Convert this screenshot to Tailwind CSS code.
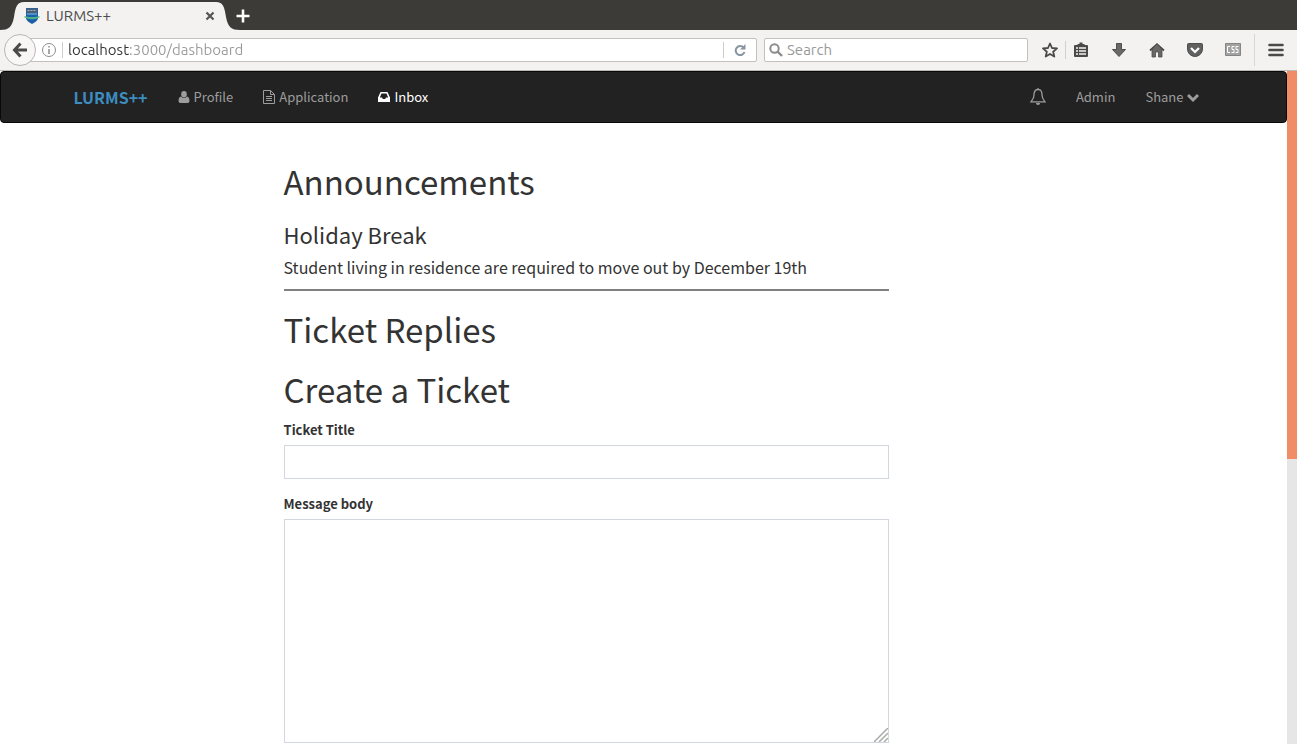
<!DOCTYPE html>
<html lang="en">
<head>
<meta charset="utf-8">
<meta name="viewport" content="width=device-width, initial-scale=1">
<title>LURMS++</title>
<script src="https://cdn.jsdelivr.net/npm/@tailwindcss/browser@4"></script>
</head>
<body class="flex min-h-screen flex-col bg-white font-['Noto_Sans_CJK_SC','Noto_Sans',sans-serif] text-[#333333]">

<!-- Browser window -->
<header class="font-[Ubuntu,'Noto_Sans',sans-serif] text-[15px] leading-[22px] text-[#4c4c4c]">
  <div class="flex h-[30px] items-end bg-[#3c3b37]">
    <svg class="h-7 w-6 shrink-0" viewBox="0 0 24 28" fill="#f3f2f0"><path d="M0 28C9 28 12 25 14 15C15.500 5 17 0 24 0V28Z"/></svg>
    <div class="flex h-7 w-[192px] items-center bg-[#f3f2f0]">
      <svg class="h-4 w-4 shrink-0" viewBox="0 0 16 16"><path d="M2 0H14V10Q14 13 8 16Q2 13 2 10Z" fill="#1c61a8"/><path d="M2.500 .5H13.500V5H2.500Z" fill="#4a6078"/><path d="M3.500 2.500H12.500" stroke="#9eb0bd" stroke-dasharray="2 1"/><path d="M3 6H13" stroke="#86bfe1"/><path d="M.5 8Q8 10.500 15.500 8V9.500Q8 13 .5 9.500Z" fill="#50b887"/></svg>
      <span class="ml-1.5">LURMS++</span>
      <button aria-label="Close tab" class="ml-auto"><svg class="h-3 w-3" viewBox="0 0 12 12" fill="none" stroke="#555" stroke-width="2.200"><path d="M2.500 2.500L9.500 9.500M9.500 2.500L2.500 9.500"/></svg></button>
    </div>
    <svg class="h-7 w-6 shrink-0" viewBox="0 0 24 28" fill="#f3f2f0"><path d="M0 0C7 0 8.500 5 10 15C12 25 15 28 24 28H0Z"/></svg>
    <button aria-label="New tab" class="-ml-1 flex h-7 items-center"><svg class="h-3.5 w-3.5" viewBox="0 0 14 14" fill="none" stroke="#fff" stroke-width="2.600"><path d="M7 0.500V13.500M.5 7H13.500"/></svg></button>
  </div>
  <div class="flex h-[41px] items-center border-b border-[#bdbbb7] bg-[#f3f2f0] pr-[13px] pl-1">
    <button aria-label="Back" class="z-10 flex h-8 w-8 shrink-0 items-center justify-center rounded-full border border-[#b9b6b2] bg-[#f8f7f6]"><svg class="h-4 w-4" viewBox="0 0 16 16" fill="none" stroke="#4a4a4a" stroke-width="3"><path d="M8.500 1.500L2.500 8L8.500 14.500M3 8H15"/></svg></button>
    <div class="-ml-2 flex h-6 min-w-0 flex-1 items-center rounded-r-xs border border-[#c4c0bb] bg-white pl-3">
      <svg class="h-4 w-4 shrink-0" viewBox="0 0 16 16" fill="none" stroke="#8c8c8c"><circle cx="8" cy="8" r="6.500"/><path d="M8 7V12M8 4V5.500" stroke-width="1.500"/></svg>
      <span class="ml-[5px] h-4 w-px bg-[#cccccc]"></span>
      <label for="url" class="sr-only">Address</label>
      <input id="url" value="localhost:3000/dashboard" class="ml-[5px] h-[22px] min-w-0 flex-1 bg-[linear-gradient(to_right,#333333_62px,#999999_62px)] bg-clip-text text-transparent outline-none">
      <span class="h-4 w-px bg-[#cccccc]"></span>
      <button aria-label="Reload" class="mx-2.5"><svg class="h-3 w-3" viewBox="0 0 12 12"><path d="M9.500 3.500A4.500 4.500 0 1 0 10.500 8" fill="none" stroke="#8794a1" stroke-width="2"/><path d="M11.500 0V5.500H6Z" fill="#8794a1"/></svg></button>
    </div>
    <div class="ml-[7px] flex h-6 w-[264px] items-center rounded-xs border border-[#c4c0bb] bg-white pl-1">
      <svg class="h-3.5 w-3.5 shrink-0" viewBox="0 0 14 14" fill="none" stroke="#8c8c8c"><circle cx="5.500" cy="5.500" r="4.200" stroke-width="2"/><path d="M8.500 8.500L13 13" stroke-width="2.400"/></svg>
      <label for="search" class="sr-only">Find</label>
      <input id="search" placeholder="Search" class="ml-1 h-[22px] w-full bg-transparent outline-none placeholder:text-[#999999]">
    </div>
    <button aria-label="Bookmark" class="ml-3.5"><svg class="h-4 w-4" viewBox="0 0 16 16" fill="none" stroke="#4a4a4a" stroke-width="1.800" stroke-linejoin="round"><path d="M8 1.500L10 6L15 6.400L11.200 9.700L12.300 14.600L8 12L3.700 14.600L4.800 9.700L1 6.400L6 6Z"/></svg></button>
    <span class="ml-[7px] h-[18px] w-px bg-[#d2d0cd]"></span>
    <button aria-label="Bookmarks list" class="ml-[7px]"><svg class="h-4 w-4" viewBox="0 0 16 16"><path d="M2 3H4.500V2H6.500V.5H9.500V2H11.500V3H14Q15 3 15 4V14Q15 15 14 15H2Q1 15 1 14V4Q1 3 2 3Z" fill="#4a4a4a"/><path d="M3 6H5M3 9H5M3 12H5M6 6H13M6 9H13M6 12H13" stroke="#f3f2f0" stroke-width="1.700"/></svg></button>
    <button aria-label="Downloads" class="ml-[22px]"><svg class="h-4 w-4" viewBox="0 0 16 16" fill="#686868" stroke="#4d4d4d"><path d="M5.500 1.500H10.500V7.500H14.500L8 14.500L1.500 7.500H5.500Z"/></svg></button>
    <button aria-label="Home" class="ml-[22px]"><svg class="h-4 w-4" viewBox="0 0 16 16"><path d="M3 8L8 4L13 8V15H9.500V10H6.500V15H3Z" fill="#686868" stroke="#4d4d4d" stroke-width=".8"/><path d="M1 8.500L8 2.200L15 8.500" fill="none" stroke="#4a4a4a" stroke-width="1.800"/></svg></button>
    <button aria-label="Pocket" class="ml-[22px]"><svg class="h-4 w-4" viewBox="0 0 16 16"><path d="M.5 2.500Q.5 1.500 1.500 1.500H14.500Q15.500 1.500 15.500 2.500V7A7.500 7.500 0 0 1 .5 7Z" fill="#606060" stroke="#4d4d4d"/><path d="M4 6L8 10L12 6" fill="none" stroke="#fff" stroke-width="2.200"/></svg></button>
    <button aria-label="CSS tool" class="mb-0.5 ml-[22px]"><svg class="h-[13px] w-4" viewBox="0 0 16 13"><path d="M.5 .5H15.500V12.500H.5Z" fill="#a2a2a2" stroke="#858585"/><path d="M5 3.500H2.500V9.500H5M9.500 3.500H7V6.500H9V9.500H6.500M13.500 3.500H11V6.500H13V9.500H10.500" fill="none" stroke="#fff"/></svg></button>
    <span class="ml-[13px] h-8 w-px bg-[#d9d7d5]"></span>
    <button aria-label="Menu" class="ml-[13px]"><svg class="h-4 w-4" viewBox="0 0 16 16" stroke="#4a4a4a" stroke-width="2.600" stroke-linecap="round"><path d="M1.500 3H14.500M1.500 8H14.500M1.500 13H14.500"/></svg></button>
  </div>
</header>

<!-- Page viewport and scroll track -->
<div class="flex flex-1">
  <div class="min-w-0 flex-1">
    <nav class="rounded-[4px] border border-[#080808] bg-[#222222] text-[13px] leading-5 text-[#9d9d9d]">
      <div class="mx-auto flex h-[50px] max-w-[1170px] items-center px-[15px]">
        <a href="#" class="text-[16px] font-bold text-[#3c8dc1]">LURMS++</a>
        <a href="#" class="ml-[30px] flex items-center gap-1"><svg class="h-3 w-3" viewBox="0 0 12 12" fill="#9d9d9d"><ellipse cx="6" cy="3.200" rx="2.800" ry="3.200"/><path d="M3 5.500Q6 8.500 9 5.500Q11.500 6 11.500 10Q11.500 12 9.500 12H2.500Q.5 12 .5 10Q.5 6 3 5.500Z"/></svg>Profile</a>
        <a href="#" class="ml-[30px] flex items-center gap-1"><svg class="h-3.5 w-3" viewBox="0 0 12 14" fill="none" stroke="#9d9d9d"><path d="M.5 .5H7.500L11.500 4.500V13.500H.5ZM7.500 .5V4.500H11.500M3 6.500H9M3 8.500H9M3 10.500H9"/></svg>Application</a>
        <a href="#" class="ml-[30px] flex items-center gap-1 text-white"><svg class="h-3 w-3" viewBox="0 0 12 12"><path fill="#fff" fill-rule="evenodd" d="M2.500 1H9.500L12 6.500V10.500Q12 11 11.500 11H.5Q0 11 0 10.500V6.500ZM3.500 2.500L1.800 6.500H4L4.800 8H7.200L8 6.500H10.200L8.500 2.500Z"/></svg>Inbox</a>
        <button aria-label="Notifications" class="ml-auto"><svg class="h-[18px] w-4" viewBox="0 0 16 18" fill="none" stroke="#9d9d9d" stroke-width="1.300"><path d="M8 1.500C4.500 1.500 4 4.500 4 7C4 10.500 2.500 12 1 13.800H15C13.500 12 12 10.500 12 7C12 4.500 11.500 1.500 8 1.500ZM8 0V2"/><path d="M6 15H10Q10 17 8 17Q6 17 6 15Z" fill="#9d9d9d" stroke="none"/></svg></button>
        <a href="#" class="ml-[30px]">Admin</a>
        <button class="mr-[15px] ml-[30px] flex items-center gap-[3px]">Shane<svg class="h-3 w-3" viewBox="0 0 12 12" fill="none" stroke="#9d9d9d" stroke-width="3"><path d="M1 4L6 9L11 4"/></svg></button>
      </div>
    </nav>

    <main class="mx-auto max-w-[1170px]">
      <div class="ml-[225px] max-w-[605px] pt-[38px]">
        <h1 class="text-[33px] leading-10">Announcements</h1>
        <h2 class="mt-5 text-[22px] leading-[26px]">Holiday Break</h2>
        <p class="mt-2 text-[16px] leading-6">Student living in residence are required to move out by December 19th</p>
        <hr class="mt-2.5 border-t-2 border-[#808080]">
        <h1 class="mt-[18px] text-[33px] leading-10">Ticket Replies</h1>
        <h1 class="mt-5 text-[33px] leading-10">Create a Ticket</h1>
        <form>
          <label for="title" class="mt-[11px] block text-[13px] leading-5 font-bold">Ticket Title</label>
          <input id="title" class="mt-[5px] block h-[34px] w-full border border-[#d2d6de] px-3 outline-none">
          <label for="body" class="mt-[15px] block text-[13px] leading-5 font-bold">Message body</label>
          <div class="relative mt-[5px]">
            <textarea id="body" class="block h-56 w-full resize-none border border-[#d2d6de] px-3 py-1.5 outline-none"></textarea>
            <svg class="pointer-events-none absolute right-px bottom-px h-3.5 w-3.5" viewBox="0 0 14 14" stroke="#aaaaa6" stroke-width="1.500"><path d="M0 14L14 0M5 14L14 5M10 14L14 10"/></svg>
          </div>
        </form>
      </div>
    </main>
  </div>
  <div class="w-2.5 shrink-0 bg-[#e6e6e6]" aria-hidden="true"><div class="h-[388px] bg-[#f08d67]"></div></div>
</div>
</body>
</html>
